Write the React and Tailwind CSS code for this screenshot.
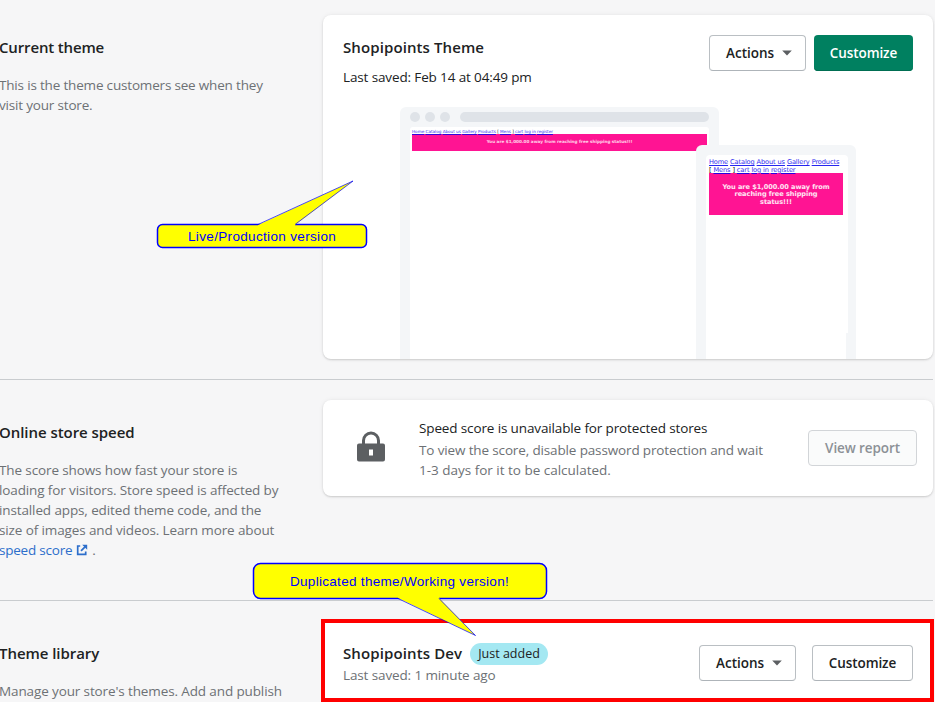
import React from "react";

const heading = "whitespace-nowrap font-semibold text-[15px] leading-6 text-[#202223]";
const muted = "whitespace-nowrap text-[13.5px] leading-5 tracking-[-0.12px] text-[#6d7175]";
const outline =
  "flex items-center whitespace-nowrap rounded-[4px] border border-[#babfc3] border-b-[#aeb4b9] bg-white text-[13.5px] font-semibold text-[#202223]";

function Caret() {
  return (
    <svg className="ml-2 shrink-0" width="10" height="6" viewBox="0 0 10 6">
      <path d="M0.2 0.5h9.600L5 5.500z" fill="#5c5f62" />
    </svg>
  );
}

function External() {
  return (
    <svg className="ml-1 shrink-0" width="12" height="12" viewBox="0 0 12 12">
      <path d="M4.200 2H1.700v8.300h8V7.600M5 6.900 9.300 2.600" fill="none" stroke="#2c6ecb" strokeWidth="1.700" />
      <path d="M6.200 0.800h5v5z" fill="#2c6ecb" />
    </svg>
  );
}

function Lock() {
  return (
    <svg className="mb-[3px] shrink-0" width="28" height="31" viewBox="0 0 28 31">
      <path d="M6.500 13V9.500a7.500 7.500 0 0 1 15 0V13" fill="none" stroke="#5c5f62" strokeWidth="3" />
      <path fillRule="evenodd" d="M2 12.500h24a2 2 0 0 1 2 2v14a2 2 0 0 1-2 2H2a2 2 0 0 1-2-2v-14a2 2 0 0 1 2-2zm10 6v6h4v-6z" fill="#5c5f62" />
    </svg>
  );
}

function DesktopPreview() {
  return (
    <div className="flex h-full w-[319px] flex-col rounded-t-[6px] bg-[#f4f6f8] px-[10px] pt-[5px]">
      <div className="flex gap-[5px]">
        <span className="size-[10px] rounded-full bg-[#dfe3e8]" />
        <span className="size-[10px] rounded-full bg-[#dfe3e8]" />
        <span className="size-[10px] rounded-full bg-[#dfe3e8]" />
        <span className="ml-[5px] h-[10px] w-[249px] rounded-full bg-[#dfe3e8]" />
      </div>
      <div className="mt-[5px] flex-1 rounded-t-[3px] bg-white px-[2px] pt-[2px]">
        <div className="h-[5px] whitespace-nowrap font-['DejaVu_Sans'] text-[4.2px] leading-[5px] tracking-[-0.04px] text-[#0000ee]/80">
          <u>Home</u> <u>Catalog</u> <u>About us</u> <u>Gallery</u> <u>Products</u> <span className="text-black">[</span> <u>Mens</u>{" "}
          <span className="text-black">]</span> <u>cart</u> <u>log in</u> <u>register</u>
        </div>
        <div className="flex h-[17px] items-center justify-center whitespace-nowrap bg-[#ff1493] font-['DejaVu_Sans'] text-[4.2px] font-bold text-white/80">
          You are $1,000.00 away from reaching free shipping status!!!
        </div>
      </div>
    </div>
  );
}

function PhonePreview() {
  return (
    <div className="absolute left-[296px] top-[38px] h-[214px] w-[160px] rounded-t-[6px] bg-[#f4f6f8] pl-[10px] pt-[10px]">
      <div className="h-[178px] w-[142px] rounded-t-[4px] bg-white pl-[3px] pt-[4px]">
        <div className="h-[14px] whitespace-nowrap font-['DejaVu_Sans'] text-[6.6px] leading-[7.5px] tracking-[-0.11px] text-[#0000ee]/85">
          <div>
            <u>Home</u> <u>Catalog</u> <u>About us</u> <u>Gallery</u> <u>Products</u>
          </div>
          <div>
            <span className="text-black">[</span> <u>Mens</u> <span className="text-black">]</span> <u>cart</u> <u>log in</u> <u>register</u>
          </div>
        </div>
        <div className="flex h-[42px] w-[134px] flex-col items-center justify-center whitespace-nowrap bg-[#ff1493] pt-[2px] font-['DejaVu_Sans'] text-[6.6px] font-bold leading-[7.5px] tracking-[-0.05px] text-white/90">
          <span>You are $1,000.00 away from</span>
          <span>reaching free shipping</span>
          <span>status!!!</span>
        </div>
      </div>
      <div className="h-[26px] w-[140px] bg-white" />
    </div>
  );
}

export default function App() {
  return (
    <div className="relative h-[702px] w-[935px] overflow-hidden bg-[#f6f6f7] font-['Open_Sans','Noto_Sans',sans-serif]">
      <section className="flex h-[380px] w-[933px] border-b border-[#c9cccf] pt-[15px]">
        <div className="-ml-px w-[324px] shrink-0 pt-5">
          <h2 className={heading + " tracking-[-0.15px]"}>Current theme</h2>
          <div className="mt-4">
            <p className={muted}><span className="tracking-[-0.18px]">This is the theme customers see when they</span></p>
            <p className={muted}><span className="tracking-[-0.18px]">visit your store.</span></p>
          </div>
        </div>
        <div className="h-[344px] w-[610px] overflow-hidden rounded-lg bg-white shadow-[0_0_5px_rgba(23,24,24,0.06),0_1px_2px_rgba(0,0,0,0.15)]">
          <div className="flex h-[92px] items-start pl-5 pr-5 pt-5">
            <div className="flex-1">
              <h3 className={heading + " tracking-[0.1px]"}>Shopipoints Theme</h3>
              <p className="mt-2 whitespace-nowrap text-[13.5px] leading-5 tracking-[-0.13px] text-[#202223]">Last saved: Feb 14 at 04:49 pm</p>
            </div>
            <button className={outline + " h-9 w-[97px] pl-4"}>Actions<Caret /></button>
            <button className="ml-2 h-9 w-[99px] whitespace-nowrap rounded-[4px] bg-[#008060] text-[13.5px] font-semibold tracking-[-0.1px] text-white shadow-[inset_0_-1px_0_#006e52]">
              Customize
            </button>
          </div>
          <div className="relative ml-[77px] h-[252px]">
            <DesktopPreview />
            <PhonePreview />
          </div>
        </div>
      </section>

      <section className="flex h-[221px] w-[933px] border-b border-[#c9cccf] pt-5">
        <div className="-ml-px w-[324px] shrink-0 pt-5">
          <h2 className={heading + " tracking-[-0.05px]"}>Online store speed</h2>
          <div className="mt-4">
            <p className={muted}>The score shows how fast your store is</p>
            <p className={muted}>loading for visitors. Store speed is affected by</p>
            <p className={muted}>installed apps, edited theme code, and the</p>
            <p className={muted}>size of images and videos. Learn more about</p>
            <p className={muted + " flex items-center"}>
              <span className="tracking-[-0.22px] text-[#2c6ecb]">speed score</span>
              <External />
              <span className="ml-1">.</span>
            </p>
          </div>
        </div>
        <div className="flex h-24 w-[610px] items-center rounded-lg bg-white pl-[34px] pr-4 shadow-[0_0_5px_rgba(23,24,24,0.06),0_1px_2px_rgba(0,0,0,0.15)]">
          <Lock />
          <div className="ml-[34px] flex-1 pt-[2px]">
            <p className="mb-[2px] whitespace-nowrap text-[13.5px] leading-5 tracking-[-0.13px] text-[#202223]">Speed score is unavailable for protected stores</p>
            <p className={muted}><span className="tracking-[-0.14px]">To view the score, disable password protection and wait</span></p>
            <p className={muted}><span className="tracking-[-0.01px]">1-3 days for it to be calculated.</span></p>
          </div>
          <button className="h-9 w-[109px] whitespace-nowrap rounded-[4px] border border-[#d2d5d8] bg-[#fafbfb] text-[13.5px] font-semibold tracking-[-0.1px] text-[#8c9196]">
            View report
          </button>
        </div>
      </section>

      <section className="flex h-[101px] w-[934px] pt-[18px]">
        <div className="-ml-px w-[322px] shrink-0 pt-[22px]">
          <h2 className={heading + " tracking-[-0.05px]"}>Theme library</h2>
          <p className={muted + " mt-4"}>Manage your store's themes. Add and publish</p>
        </div>
        <div className="flex h-[83px] w-[613px] items-start border-4 border-[#ff0000] bg-white pl-[18px] pr-[17px] pt-[18px]">
          <div className="flex-1">
            <div className="flex h-6 items-center">
              <h3 className={heading + " w-[119px] tracking-[0.12px]"}>Shopipoints Dev</h3>
              <span className="ml-2 mt-px flex h-[22px] w-[78px] items-center justify-center whitespace-nowrap rounded-full bg-[#a4e8f2] pt-[2px] text-[12.5px] text-[#202223]">Just added</span>
            </div>
            <p className={muted}>Last saved: 1 minute ago</p>
          </div>
          <button className={outline + " mt-1 h-9 w-[97px] pl-4"}>Actions<Caret /></button>
          <button className={outline + " ml-4 mt-1 h-9 w-[101px] justify-center tracking-[-0.1px]"}>Customize</button>
        </div>
      </section>

      <div className="absolute left-[156px] top-[178px] h-[72px] w-[214px]">
        <svg className="absolute inset-0" width="214" height="72" viewBox="0 0 214 72">
          <rect x="1.5" y="46.5" width="209" height="23" rx="5" fill="#ffff00" stroke="#0000ff" strokeWidth="1.5" />
          <path d="M102 47 197 3 139 47v2h-37z" fill="#ffff00" />
          <path d="M102 46.5 197 3 139 46.5" fill="none" stroke="#0000ff" strokeWidth="0.7" />
        </svg>
        <div className="absolute left-[32px] top-[51px] whitespace-nowrap font-['Liberation_Sans'] text-[13.5px] leading-4 tracking-[0.34px] text-[#0000ff]">Live/Production version</div>
      </div>

      <div className="absolute left-[252px] top-[560px] h-[80px] w-[298px]">
        <svg className="absolute inset-0" width="298" height="80" viewBox="0 0 298 80">
          <rect x="1.5" y="3.5" width="293" height="35" rx="7" fill="#ffff00" stroke="#0000ff" strokeWidth="1.5" />
          <path d="M146 36v2l77.500 37.500L187 38v-2z" fill="#ffff00" />
          <path d="M146 38.500 223.500 75.500 187 38.500" fill="none" stroke="#0000ff" strokeWidth="0.7" />
        </svg>
        <div className="absolute left-[38px] top-[14px] whitespace-nowrap font-['Liberation_Sans'] text-[13.5px] leading-4 tracking-[0.3px] text-[#0000ff]">Duplicated theme/Working version!</div>
      </div>
    </div>
  );
}
